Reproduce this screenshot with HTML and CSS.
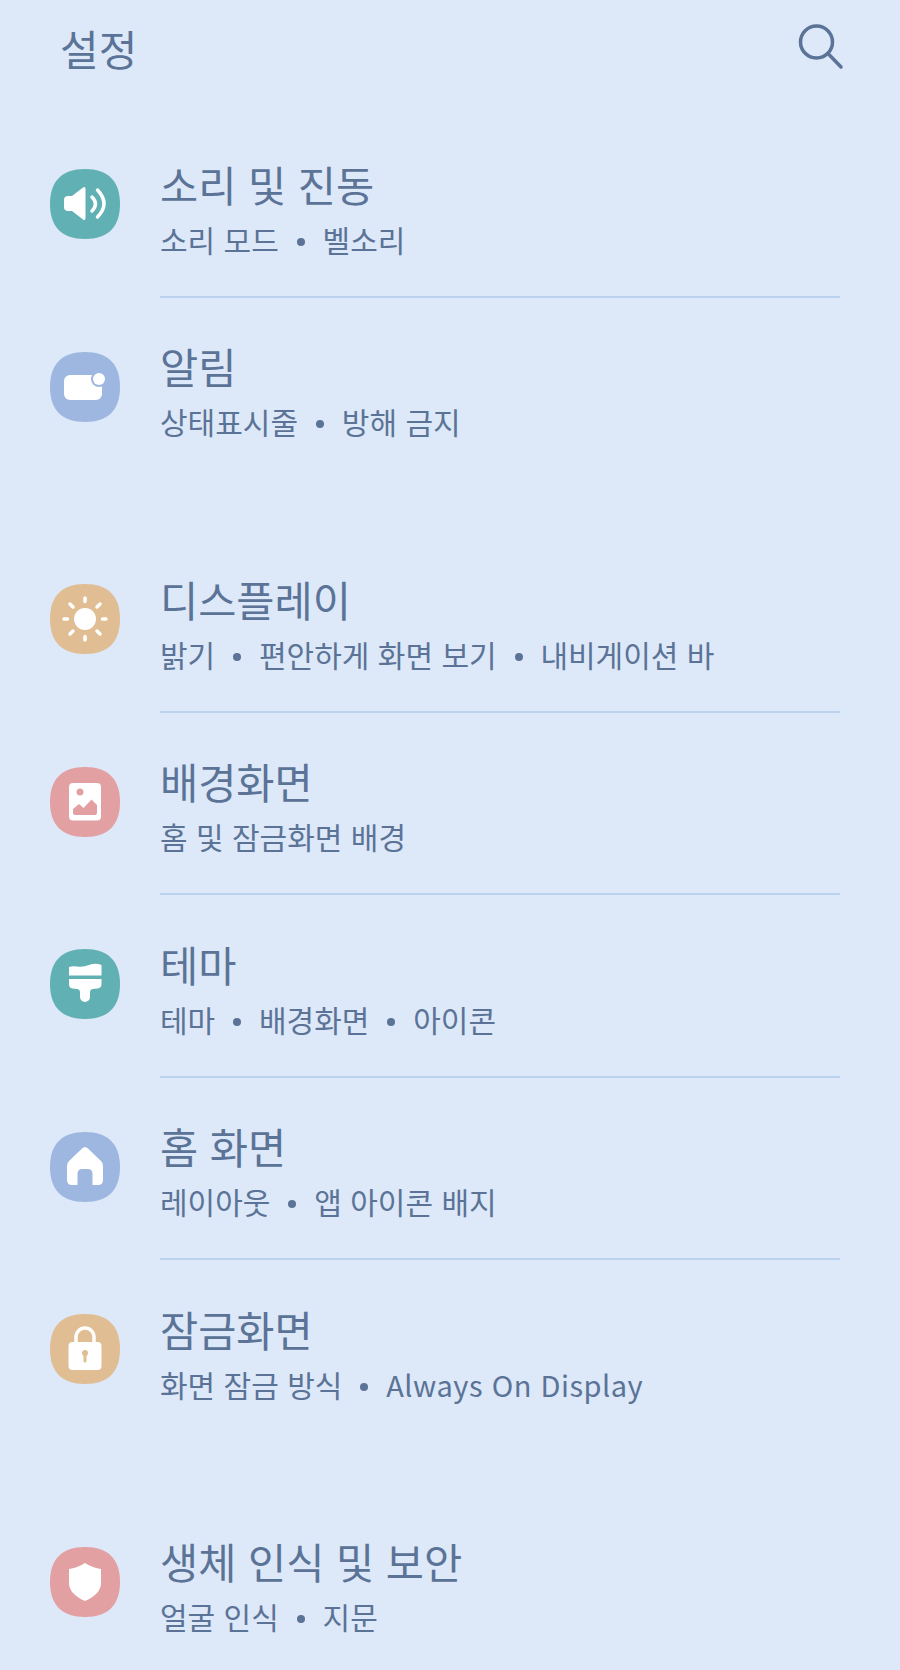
FILE: index.html
```html
<!DOCTYPE html>
<html lang="ko">
<head>
    <meta charset="UTF-8">
    <meta name="viewport" content="width=device-width, initial-scale=1.0">
    <title>설정</title>
    <link rel="stylesheet" href="styles.css">
</head>
<body>
    <div class="header">
        <h1>설정</h1>
        <svg class="search" viewBox="0 0 48 48">
            <circle cx="20.5" cy="20" r="16"/>
            <path d="M32.500 32 L45 45"/>
        </svg>
    </div>

    <div class="group">
        <div class="row">
            <svg class="icon teal" viewBox="0 0 70 70">
                <path class="bg" d="M35 0C58 0 70 12 70 35C70 58 58 70 35 70C12 70 0 58 0 35C0 12 12 0 35 0Z"/>
                <path class="fill" d="M18 27h4L33 18.500q2.500-1.500 2.500 1.500v29q0 3-2.500 1.500L22 42h-4q-4 0-4-4v-7q0-4 4-4z"/>
                <path class="line" d="M42 28q7 7 0 14M47.500 21q13 13.500 0 27"/>
            </svg>
            <div class="text">
                <div class="title">소리 및 진동</div>
                <div class="sub">소리 모드 <span class="dot"></span> 벨소리</div>
            </div>
        </div>
        <div class="row">
            <svg class="icon blue" viewBox="0 0 70 70">
                <path class="bg" d="M35 0C58 0 70 12 70 35C70 58 58 70 35 70C12 70 0 58 0 35C0 12 12 0 35 0Z"/>
                <rect class="fill" x="14" y="23" width="38" height="25" rx="6"/>
                <circle class="bg" cx="49" cy="27" r="8"/>
                <circle class="fill" cx="49" cy="27" r="6"/>
            </svg>
            <div class="text">
                <div class="title">알림</div>
                <div class="sub">상태표시줄 <span class="dot"></span> 방해 금지</div>
            </div>
        </div>
    </div>

    <div class="group">
        <div class="row">
            <svg class="icon tan" viewBox="0 0 70 70">
                <path class="bg" d="M35 0C58 0 70 12 70 35C70 58 58 70 35 70C12 70 0 58 0 35C0 12 12 0 35 0Z"/>
                <circle class="fill" cx="35" cy="35" r="11"/>
                <path class="line" d="M35 14v3.500M35 52.500v3.500M14 35h3.500M52.500 35h3.500M20 20l3 3M47 47l3 3M50 20l-3 3M23 47l-3 3"/>
            </svg>
            <div class="text">
                <div class="title">디스플레이</div>
                <div class="sub">밝기 <span class="dot"></span> 편안하게 화면 보기 <span class="dot"></span> 내비게이션 바</div>
            </div>
        </div>
        <div class="row">
            <svg class="icon pink" viewBox="0 0 70 70">
                <path class="bg" d="M35 0C58 0 70 12 70 35C70 58 58 70 35 70C12 70 0 58 0 35C0 12 12 0 35 0Z"/>
                <rect class="fill" x="19" y="16" width="32" height="37.500" rx="4"/>
                <circle class="bg" cx="30" cy="25" r="3.500"/>
                <path class="bg" d="M23 42L29 37L33.500 41L41.500 32.500L47 38V46q0 2-2 2H25q-2 0-2-2z"/>
            </svg>
            <div class="text">
                <div class="title">배경화면</div>
                <div class="sub">홈 및 잠금화면 배경</div>
            </div>
        </div>
        <div class="row">
            <svg class="icon teal" viewBox="0 0 70 70">
                <path class="bg" d="M35 0C58 0 70 12 70 35C70 58 58 70 35 70C12 70 0 58 0 35C0 12 12 0 35 0Z"/>
                <path class="fill" d="M19 18q4-1 8-.5q6 1 12-1.500q6-2.500 12.500 0V26.500H19z"/>
                <path class="fill" d="M19 30h32.500v5q0 4-4 4.500l-5 .5q-2.500.3-2.500 3V48a5 5 0 0 1-10 0v-5q0-2.700-2.500-3l-5-.5q-3.500-.5-3.500-4.500z"/>
            </svg>
            <div class="text">
                <div class="title">테마</div>
                <div class="sub">테마 <span class="dot"></span> 배경화면 <span class="dot"></span> 아이콘</div>
            </div>
        </div>
        <div class="row">
            <svg class="icon blue" viewBox="0 0 70 70">
                <path class="bg" d="M35 0C58 0 70 12 70 35C70 58 58 70 35 70C12 70 0 58 0 35C0 12 12 0 35 0Z"/>
                <path class="fill" d="M35 15q-1.500 0-3 1.500L19 29q-2 2-2 5v14q0 5 5 5h5.500V42q0-5 5-5h5q5 0 5 5v11H48q5 0 5-5V34q0-3-2-5L38 16.500q-1.500-1.500-3-1.500z"/>
            </svg>
            <div class="text">
                <div class="title">홈 화면</div>
                <div class="sub">레이아웃 <span class="dot"></span> 앱 아이콘 배지</div>
            </div>
        </div>
        <div class="row">
            <svg class="icon tan" viewBox="0 0 70 70">
                <path class="bg" d="M35 0C58 0 70 12 70 35C70 58 58 70 35 70C12 70 0 58 0 35C0 12 12 0 35 0Z"/>
                <path class="line" d="M26 29V23a9 9 0 0 1 18 0v6"/>
                <rect class="fill" x="18.500" y="28" width="33" height="28" rx="4"/>
                <circle class="bg" cx="35" cy="39" r="3"/>
                <path class="stem" d="M35 40v7"/>
            </svg>
            <div class="text">
                <div class="title">잠금화면</div>
                <div class="sub">화면 잠금 방식 <span class="dot"></span> <span class="latin">Always On Display</span></div>
            </div>
        </div>
    </div>

    <div class="group">
        <div class="row">
            <svg class="icon pink" viewBox="0 0 70 70">
                <path class="bg" d="M35 0C58 0 70 12 70 35C70 58 58 70 35 70C12 70 0 58 0 35C0 12 12 0 35 0Z"/>
                <path class="fill" d="M35 16q8 5 16 6v14q0 11-16 18q-16-7-16-18V22q8-1 16-6z"/>
            </svg>
            <div class="text">
                <div class="title">생체 인식 및 보안</div>
                <div class="sub">얼굴 인식 <span class="dot"></span> 지문</div>
            </div>
        </div>
    </div>
</body>
</html>
```

FILE: styles.css
```css
body {
    margin: 0;
    height: 1670px;
    overflow: hidden;
    background: #dde8f8;
    color: #5a7396;
    font-family: "Noto Sans CJK KR", "Noto Sans", sans-serif;
}

.header {
    display: flex;
    justify-content: space-between;
    align-items: center;
    height: 96px;
    padding: 0 56px 0 60px;
}

.header h1 {
    margin: 0;
    font-size: 42px;
    font-weight: 400;
    line-height: 96px;
}

.search {
    width: 48px;
    height: 48px;
    margin-bottom: 4px;
}

.search circle,
.search path {
    fill: none;
    stroke: #5a7396;
    stroke-width: 3.5;
    stroke-linecap: round;
}

.group {
    margin-bottom: 50px;
}

.row {
    display: flex;
    align-items: center;
    gap: 40px;
    height: 182.5px;
    padding: 0 60px 0 50px;
}

.header + .group {
    padding-top: 17px;
}

.icon {
    width: 70px;
    height: 70px;
    flex-shrink: 0;
}

.teal .bg { fill: #60b0b4; }
.blue .bg { fill: #9db7e1; }
.tan .bg { fill: #e0bd92; }
.pink .bg { fill: #e2a0a2; }

.tan .stem { stroke: #e0bd92; }

.icon .fill {
    fill: #fff;
}

.icon .line {
    fill: none;
    stroke: #fff;
    stroke-width: 3.5;
    stroke-linecap: round;
}

.icon .stem {
    fill: none;
    stroke-width: 3;
    stroke-linecap: round;
}

.text {
    flex: 1;
    align-self: stretch;
    display: flex;
    flex-direction: column;
    justify-content: center;
    gap: 5px;
    padding-top: 8px;
    margin-bottom: -2px;
    border-bottom: 2px solid #bad2ee;
    box-sizing: border-box;
}

.row:last-child .text {
    border-bottom-color: transparent;
}

.title {
    font-size: 41.5px;
    line-height: 56px;
}

.sub {
    font-size: 30px;
    line-height: 44px;
    white-space: nowrap;
}

.dot {
    display: inline-block;
    width: 8px;
    height: 8px;
    margin: 0 9.5px;
    border-radius: 50%;
    background: #5a7396;
    vertical-align: 0.2em;
}

.latin {
    font-size: 29px;
    letter-spacing: 0.5px;
}
```
